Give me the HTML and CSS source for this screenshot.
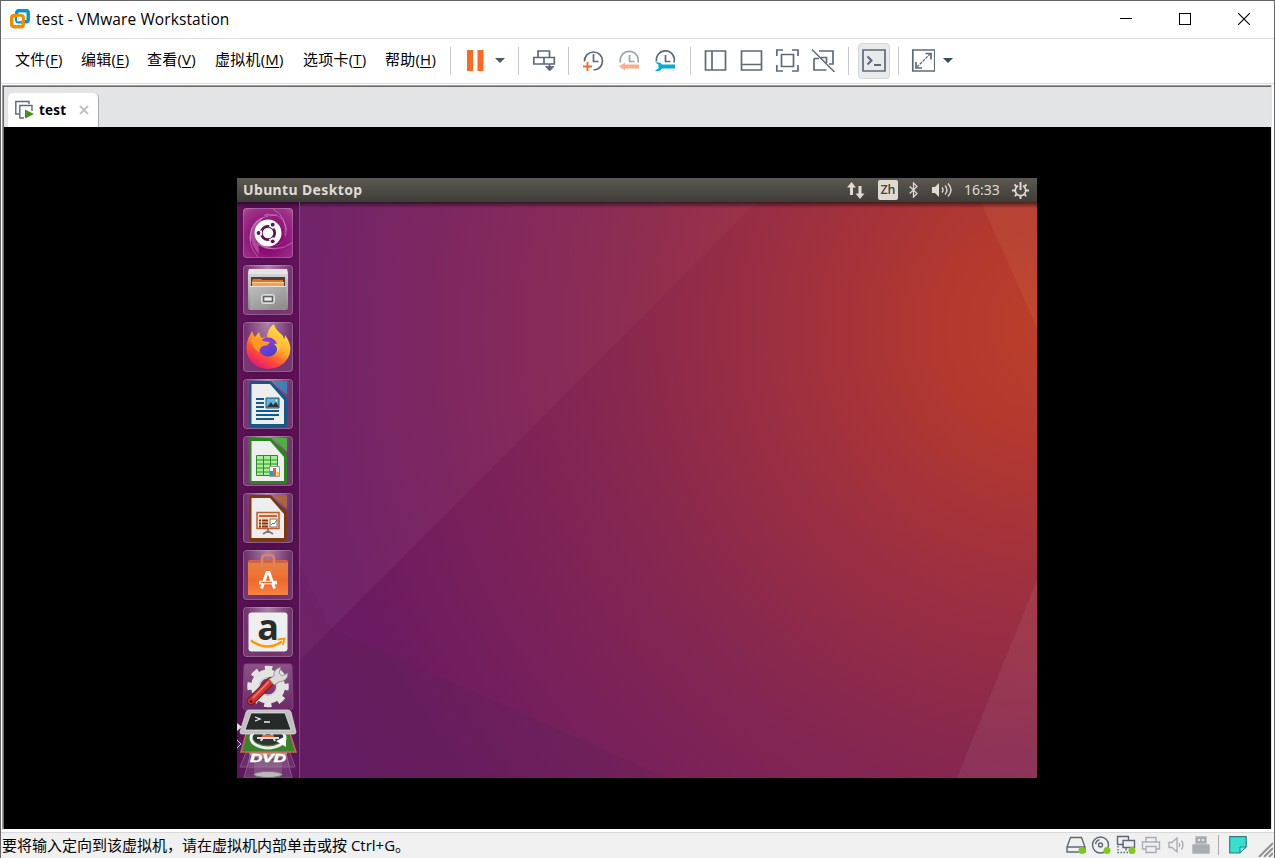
FILE: index.html
```html
<!DOCTYPE html>
<html lang="zh-CN">
<head>
<meta charset="utf-8">
<title>test - VMware Workstation</title>
<link rel="stylesheet" href="styles.css">
</head>
<body>
<div class="window">
  <header class="titlebar">
    <svg class="logo" width="22" height="22" viewBox="0 0 22 22" fill="none">
      <rect x="7.700" y="2.700" width="11.500" height="11" rx="2" stroke="#0095d3" stroke-width="3.400"/>
      <rect x="2.700" y="7.700" width="11.500" height="11" rx="2" stroke="#f38b00" stroke-width="3.400"/>
      <path d="M7.700 9V13.200H12" stroke="#0095d3" stroke-width="1.500"/>
      <path d="M8.700 9.500V12.500H12V9.500z" stroke="#fff" stroke-width="1.300"/>
    </svg>
    <span class="title">test - VMware Workstation</span>
    <div class="controls">
      <svg width="12" height="12"><path d="M0 5.500H12" stroke="#000"/></svg>
      <svg width="12" height="12"><rect x=".5" y=".5" width="11" height="11" fill="none" stroke="#000"/></svg>
      <svg width="12" height="12"><path d="M0 0L12 12M12 0L0 12" stroke="#000" stroke-width="1.100"/></svg>
    </div>
  </header>

  <nav class="menubar">
    <div class="menus">
      <span>文件(<u>F</u>)</span><span>编辑(<u>E</u>)</span><span>查看(<u>V</u>)</span><span>虚拟机(<u>M</u>)</span><span>选项卡(<u>T</u>)</span><span>帮助(<u>H</u>)</span>
    </div>
    <div class="group power">
      <svg class="ico" viewBox="0 0 24 24"><path d="M3 2h6v21H3zM13.500 2h6v21h-6z" fill="#fb6a21"/></svg>
      <svg class="caret" width="12" height="8"><path d="M1 2H11L6 7Z" fill="#485969"/></svg>
    </div>
    <div class="group send">
      <svg class="ico line" viewBox="0 0 24 24"><path d="M6 9V3h11.500v6M1.800 9.500h20.500v6.500H1.800zM12 9.500V16M17.500 16v6"/><path d="M13.500 18.500h8.500L17.700 23z" fill="#5d6b78" stroke-width=".8"/></svg>
    </div>
    <div class="group snaps">
      <svg class="ico line" viewBox="0 0 24 24"><path d="M3.500 13.500A9 9 0 1 1 12.500 22M12.500 6v7.500h5"/><path class="orange" d="M2 18.500h9M6.500 14v9"/></svg>
      <svg class="ico line" viewBox="0 0 24 24"><g opacity=".6"><path d="M3.500 14.500A9 9 0 1 1 21 14.500M12.500 7v6.500h5"/><path d="M2 18.500L8 14.500v2h14v4H8v2z" fill="#fb7a3d" stroke="none"/></g></svg>
      <svg class="ico line" viewBox="0 0 24 24"><path d="M3.500 13.500A9 9 0 1 1 21 14.500M12.500 7v6.500h5"/><path d="M2 14.500q5-1.200 7 2h13v4H9q-2 3.700-7 2l3.500-2v-4z" fill="#00aed0" stroke="none"/></svg>
    </div>
    <div class="group views">
      <svg class="ico line" viewBox="0 0 24 24"><path d="M2.500 3h20v19h-20zM9 3v19"/></svg>
      <svg class="ico line" viewBox="0 0 24 24"><path d="M2.500 3h20v19h-20zM2.500 16.500h20"/></svg>
      <svg class="ico line" viewBox="0 0 24 24"><path d="M1.800 8V2H8M17 2h6v6M23 17v6h-6M8 23H1.800v-6M6.500 6.500h12v12h-12z"/></svg>
      <svg class="ico line" viewBox="0 0 24 24"><path d="M8 3h14v13h-4M3 10.500v11.500h12.500M3 10.500h5M9.500 9.500h6V15"/><path d="M1 1.500L23.500 24" stroke-width="1.500"/></svg>
    </div>
    <div class="group console">
      <span class="pressed"><svg class="ico line" viewBox="0 0 24 24"><path d="M1 2h22v21H1z"/><path d="M5.500 8.500l4 4-4 4M12 17h7" stroke-width="2.100"/></svg></span>
    </div>
    <div class="group full">
      <svg class="ico line" viewBox="0 0 24 24"><path d="M1.800 2h22v21h-22z"/><path d="M14.500 5.500h5.500v6M5 14v6h6"/><path d="M6 19L19 6" stroke-dasharray="3 1" stroke-width="1.300"/></svg>
      <svg class="caret" width="12" height="8"><path d="M1 2H11L6 7Z" fill="#354b5e"/></svg>
    </div>
  </nav>

  <main class="frame">
    <div class="tabs">
      <div class="tab">
        <svg width="20" height="20" fill="none" stroke="#5b6b78" stroke-width="1.400"><path d="M4 14H.8V1.500H14V4"/><path d="M9 18H4.800V5.500H17V11"/><path d="M10 9.500L19 14l-9 4.500z" fill="#3d9412" stroke="none"/></svg>
        <b>test</b>
        <svg class="close" width="10" height="10"><path d="M1 1l8 8M9 1L1 9" stroke="#c2c2c2" stroke-width="1.900"/></svg>
      </div>
    </div>
    <div class="screen">
      <div class="desktop">
        <svg class="wallpaper" width="800" height="600" viewBox="0 0 800 600">
          <defs>
            <radialGradient id="wall" gradientUnits="userSpaceOnUse" cx="815" cy="150" r="860">
              <stop offset="0" stop-color="#bd3f2a"/><stop offset=".13" stop-color="#b3392f"/><stop offset=".3" stop-color="#9f303f"/>
              <stop offset=".5" stop-color="#88284e"/><stop offset=".68" stop-color="#7a2159"/><stop offset=".86" stop-color="#6c1b61"/><stop offset="1" stop-color="#681b64"/>
            </radialGradient>
            <linearGradient id="shade" x2="0" y2="1"><stop stop-color="#000" stop-opacity=".55"/><stop offset="1" stop-color="#000" stop-opacity="0"/></linearGradient>
            <linearGradient id="veil" x2="1"><stop stop-color="#9a60a0" stop-opacity=".13"/><stop offset="1" stop-color="#e07070" stop-opacity=".06"/></linearGradient>
          </defs>
          <path d="M0 0h800v600H0z" fill="url(#wall)"/>
          <path d="M62 24H520L94 451 62 385z" fill="url(#veil)"/>
          <path d="M62 385L94 451 62 484z" fill="#fff" opacity=".03"/>
          <path d="M62 484L94 451 430 600H62z" fill="#4a2850" opacity=".14"/>
          <path d="M744 24h56v126z" fill="#d67a50" opacity=".16"/>
          <path d="M800 402v198h-80z" fill="#fff" opacity=".06"/>
          <path d="M0 24h800v6H0z" fill="url(#shade)"/>
        </svg>
        <div class="panel">
          <span class="panel-title">Ubuntu Desktop</span>
          <div class="indicators">
            <svg class="net" width="18" height="17" fill="#dfdbd2"><path d="M0 5.500L4.500 0 9 5.500H6V13H3V5.500zM8.500 11.500h3V4h3v7.500h3L13 17z"/></svg>
            <span class="ime">Zh</span>
            <svg class="bt" width="9" height="16" fill="none" stroke="#dfdbd2" stroke-width="1.300"><path d="M.7 4.500L8 11.500 4.500 15V1L8 4.500.7 11.500"/></svg>
            <svg class="vol" width="20" height="16" fill="none" stroke="#dfdbd2" stroke-width="1.400"><path d="M0 5h3l4-4v14l-4-4H0z" fill="#dfdbd2" stroke="none"/><path d="M10 5.500q2 2.500 0 5M13 3.500q4 4.500 0 9M16 1.500q6 6.500 0 13"/></svg>
            <span class="clock">16:33</span>
            <svg class="gear" width="17" height="17" viewBox="0 0 17 17" fill="none" stroke="#dfdbd2"><path d="M6 3.800a5.200 5.200 0 1 0 5 0" stroke-width="1.700"/><path d="M8.500 0v8" stroke-width="2"/><path d="M2.500 2.500l2.300 2.300M14.500 2.500l-2.300 2.300M0 8.500h3M14 8.500h3M2.800 14.200l2-2M14.200 14.200l-2-2M8.500 14v3" stroke-width="1.900"/></svg>
          </div>
        </div>
        <aside class="launcher">
          <div class="tile dash"><svg width="50" height="50" viewBox="0 0 50 50">
            <path d="M7 34Q4 12 26 7 42 6 43 24 42 38 30 38 44 36 44 20 40 4 22 6M16 46Q2 32 14 15M12 33Q24 49 48 34 30 46 12 33" fill="#fff" opacity=".26"/>
            <path d="M15 49Q3 36 9 20 16 7 34 7M30 1Q45 9 42 28M49 35Q31 47 14 35" fill="none" stroke="#fff" opacity=".3"/>
            <circle cx="25" cy="25" r="13.500" fill="#fff"/><circle cx="25" cy="25" r="6.700" fill="none" stroke="#611052" stroke-width="2.700"/>
            <path d="M16 25h3M29.500 17.200l-1.500 2.600M29.500 32.800l-1.500-2.600" stroke="#fff" stroke-width="5"/><g fill="#611052"><circle cx="15.500" cy="25" r="1.900"/><circle cx="29.700" cy="16.700" r="1.900"/><circle cx="29.700" cy="33.300" r="1.900"/></g>
          </svg></div>
          <div class="tile"><svg width="50" height="50" viewBox="0 0 50 50">
            <defs><linearGradient id="steel" x2="0" y2="1"><stop stop-color="#dfdfdf"/><stop offset="1" stop-color="#858585"/></linearGradient><linearGradient id="drawer" x2=".7" y2="1"><stop stop-color="#bdbdbd"/><stop offset=".45" stop-color="#aaa"/><stop offset="1" stop-color="#8f8f8f"/></linearGradient></defs>
            <path d="M6 4h38l1 6v34l-2 1H7l-2-1V10z" fill="url(#steel)"/><path d="M6 4h38l1 5H5z" fill="#e4e4e4"/><path d="M8 12h34v10H8z" fill="#4c4038"/><path d="M10 14h8l1 1h21v7H9v-6z" fill="#e66d28"/><path d="M9 17h32v1.500H9z" fill="#ffd29c"/><path d="M9 18.500h32V22H9z" fill="#efa252"/>
            <path d="M7 21h36v24H7z" fill="url(#drawer)"/><path d="M7 21.500h36" stroke="#e4e4e4"/><rect x="18.500" y="29.500" width="13" height="9" rx="2" fill="#bcbcbc" stroke="#ddd"/><rect x="20.700" y="31.700" width="8.600" height="4.600" fill="#eee" stroke="#555" stroke-width="1.200"/>
          </svg></div>
          <div class="tile"><svg width="50" height="50" viewBox="0 0 50 50">
            <defs><linearGradient id="fox" x1=".85" x2=".25" y2="1"><stop stop-color="#fff15a"/><stop offset=".45" stop-color="#ffae25"/><stop offset=".72" stop-color="#ff4c35"/><stop offset="1" stop-color="#e3127e"/></linearGradient><linearGradient id="globe" x2=".5" y2="1"><stop stop-color="#a13be5"/><stop offset="1" stop-color="#4b43c8"/></linearGradient></defs>
            <path d="M31 2q1 5 6 9 3 2 4 6 1-1 1-4 9 12 3 23-7 11-20 11Q9 46 4 32 2 21 7 13l2-4q1 4 3 6l4-5 2 6q4-1 6 0 0-9 7-14z" fill="url(#fox)"/>
            <circle cx="25" cy="25" r="9.700" fill="url(#globe)"/><path d="M8 17q9-2 12 2l7 1q-2 4-7 4-5 3-3 6-7-1-9-13z" fill="#ff9a1d"/><path d="M23 15q9-1 12 7-3-1-4 0 5 4 2 9 9-8 2-16-5-3-12 0z" fill="#ffc238"/>
          </svg></div>
          <div class="tile"><svg width="50" height="50" viewBox="0 0 50 50">
            <path d="M8 2h20l16 17v27q0 2-2 2H8q-2 0-2-2V4q0-2 2-2z" fill="#135a8b"/><path d="M30 2h14v14z" fill="#3089bd" opacity=".85"/><path d="M8.500 5H27l14 16v24H8.500z" fill="#eee"/>
            <path d="M13 20h8M13 24h8M13 28h8M13 32h23M13 36h23M13 40h18" stroke="#0d5b91" stroke-width="1.800"/><path d="M23 19h13v10H23z" fill="#63b2e3" stroke="#155782"/><path d="M24 28l4-5 2 3 3-3 3 5z" fill="#333"/><circle cx="33.500" cy="21.500" r="1" fill="#ff3"/>
          </svg></div>
          <div class="tile"><svg width="50" height="50" viewBox="0 0 50 50">
            <path d="M8 2h20l16 17v27q0 2-2 2H8q-2 0-2-2V4q0-2 2-2z" fill="#26881b"/><path d="M30 2h14v14z" fill="#49b83b" opacity=".9"/><path d="M8.500 5H27l14 16v24H8.500z" fill="#eee"/>
            <path d="M13.500 19.500h21v20h-21z" fill="#a9ed99" stroke="#279021"/><path d="M13 24h22M13 28h22M13 32h22M13 36h22M20.500 19v21M27.500 19v21" stroke="#279021"/><path d="M26.500 30.500h10v10h-10z" fill="#fff" stroke="#999"/><path d="M27 35h3v5h-3z" fill="#2996d2"/><path d="M30 32h3v8h-3z" fill="#ef6027"/><path d="M33.500 36h2.500v4h-2.500z" fill="#f8c434"/>
          </svg></div>
          <div class="tile"><svg width="50" height="50" viewBox="0 0 50 50">
            <path d="M8 2h20l16 17v27q0 2-2 2H8q-2 0-2-2V4q0-2 2-2z" fill="#7c390f"/><path d="M30 2h14v14z" fill="#b36a35" opacity=".85"/><path d="M8.500 5H27l14 16v24H8.500z" fill="#eee"/>
            <path d="M14 19.500h22v16H14z" fill="#fde0c8" stroke="#c15c30" stroke-width="1.500"/><path d="M16 23h18" stroke="#cb632e" stroke-width="2"/><path d="M16 27.500h9M16 30.500h9M16 33.500h9" stroke="#803511" stroke-width="2" stroke-dasharray="2 1 6"/><path d="M27 26h7v8h-7z" fill="#fff" stroke="#777"/><path d="M28 32l2-2 1 1 3-4" stroke="#289b36" fill="none"/><path d="M25 36v2l-5 3M25 38l5 3" stroke="#777" stroke-width="1.700" fill="none"/>
          </svg></div>
          <div class="tile"><svg width="50" height="50" viewBox="0 0 50 50">
            <defs><linearGradient id="bag" x2="0" y2="1"><stop stop-color="#e48647"/><stop offset=".6" stop-color="#f06b2a"/><stop offset="1" stop-color="#f68244"/></linearGradient></defs>
            <path d="M6 10h38l1 3v32H5V13z" fill="url(#bag)"/><path d="M6 10h38v3H6z" fill="#cf6345"/><path d="M19 17v-8q0-4 4-4h4q4 0 4 4v8" fill="none" stroke="#e38062" stroke-width="2.300"/>
            <path d="M18.500 38.500l5.500-16h2l5.500 16" fill="none" stroke="#fff" stroke-width="3"/><path d="M16 32.500h18" stroke="#fff" stroke-width="3.500"/><path d="M18 32.500h11" stroke="#ee6a2a" stroke-width="1.300"/>
          </svg></div>
          <div class="tile"><svg width="50" height="50" viewBox="0 0 50 50"><rect x="5.500" y="5.500" width="39" height="39" rx="3" fill="#eee"/><text class="amazon" x="25" y="33" text-anchor="middle">a</text><path d="M8 33.500q16 11.500 31 1" stroke="#ff9800" stroke-width="2.400" fill="none"/><path d="M34.500 32.500l7-1-1.500 6.500" stroke="#ff9800" stroke-width="1.800" fill="none"/></svg></div>
          <svg class="folded" width="62" height="116" viewBox="0 0 62 116">
            <defs><linearGradient id="tool" x2="0" y2="1"><stop stop-color="#fff" stop-opacity=".28"/><stop offset="1" stop-color="#fff" stop-opacity=".09"/></linearGradient></defs>
            <path d="M9 1h44q2 0 2 3l1 39q0 4-3 4H9q-3 0-3-4L7 4q0-3 2-3z" fill="url(#tool)" stroke="#85457b"/>
            <circle cx="31" cy="23.500" r="18.500" fill="none" stroke="#e4e4e3" stroke-width="4.500" stroke-dasharray="7.500 7.030" stroke-dashoffset="3.750"/><circle cx="31" cy="23.500" r="12.500" fill="none" stroke="#e4e4e3" stroke-width="9"/><circle cx="31" cy="23.500" r="9" fill="none" stroke="#c6c6c6"/>
            <path d="M14 38L34 18" stroke="#771513" stroke-width="8.500" stroke-linecap="round"/><path d="M14 38L34 18" stroke="#d43430" stroke-width="6.500" stroke-linecap="round"/><path d="M16 35L32 18.500" stroke="#f08178" stroke-width="1.500"/><path d="M32 16l5-3q-1-7 7-9l-2 6 3 3 6-3q0 8-9 9l-5 3z" fill="#dadad8" stroke="#858585" stroke-width=".8"/>
            <circle cx="14" cy="38.500" r="1.500" fill="#611"/>
            <path d="M7 115L15 86h33l7 29z" fill="#fff" fill-opacity=".13" stroke="#8a5586"/><path d="M3 104l7-17h42l6 17z" fill="#fff" fill-opacity=".1" stroke="#8a5586"/>
            <ellipse cx="31" cy="90" rx="19" ry="6" fill="#c88d91"/><ellipse cx="31" cy="97" rx="17" ry="5" fill="#555" opacity=".4"/><path d="M17 97h28v15H17z" fill="#fff" opacity=".13"/><ellipse cx="31" cy="111.500" rx="14" ry="3" fill="#bcb8bc" stroke="#777"/>
            <path d="M4 89L11 64h40l8 25z" fill="#3d802e" stroke="#c76a50" stroke-width="1.500"/><ellipse cx="31" cy="75" rx="17" ry="10" fill="none" stroke="#eee" stroke-width="3"/><ellipse cx="31" cy="74" rx="15" ry="8" fill="#303332"/><path d="M24 78l5-10h4l5 10M20 75h22" fill="none" stroke="#ddd" stroke-width="2"/><path d="M25 73h12" stroke="#e8682e" stroke-width="2"/><path d="M39 78l10-5v11z" fill="#fff"/>
            <text class="dvd" x="31" y="98.500" text-anchor="middle" textLength="36" lengthAdjust="spacingAndGlyphs">DVD</text>
            <path d="M12 47h39q2 0 3 2l5 20q0 2-2 2H5q-2 0-2-2l6-20q1-2 3-2z" fill="#bfc0bf" stroke="#e3e3e3" stroke-width=".7"/><path d="M14 50h34l6 17H8z" fill="#252b29" stroke="#eee" stroke-width=".7"/><path d="M18 54l5 2-5 2M27 59h6" fill="none" stroke="#eee" stroke-width="1.300"/>
            <path d="M0 60l5 4-5 4z" fill="#ddd"/><path d="M0 77l4 4-4 4" fill="none" stroke="#9cd4ff"/>
          </svg>
        </aside>
      </div>
    </div>
  </main>

  <footer class="status">
    <span class="message">要将输入定向到该虚拟机，请在虚拟机内部单击或按 Ctrl+G。</span>
    <div class="devices">
      <svg class="dev" viewBox="0 0 20 20"><path d="M4.500 2.500h11L19 12v5H1v-5zM1 12h18"/><circle class="on" cx="16" cy="15.500" r="3.500"/></svg>
      <svg class="dev" viewBox="0 0 20 20"><circle cx="9.500" cy="10" r="8"/><circle cx="9.500" cy="10" r="2"/><path d="M4.500 9q1-4 4-4"/><circle class="on" cx="16" cy="15.500" r="3.500"/></svg>
      <svg class="dev" viewBox="0 0 20 20"><path d="M8 9.500H1.500v-8h11V5M7 5.500h11.500v7H7zM10 12.500v3"/><path d="M2 11v6.500h11" stroke-dasharray="1.500 1.500"/><circle class="on" cx="16" cy="15.500" r="3.500"/></svg>
      <svg class="dev dim" viewBox="0 0 20 20"><path d="M5 7V2.500h10V7M5 14H1.500V7h17v7H15M5 11.500h10v6H5z"/></svg>
      <svg class="dev dim" viewBox="0 0 20 20"><path d="M3 7.500h3l5-4.500v14l-5-4.500H3zM13 8q1.500 2 0 4M15.500 5.500q3 4.500 0 9"/></svg>
      <svg class="dev dim" viewBox="0 0 20 20"><path d="M5 2h10v6H5zM2 10h16v8H2z" fill="#a9adb3"/><path d="M8 4v2M12 4v2" stroke="#fff"/></svg>
      <i class="divider"></i>
      <svg class="note" width="18" height="18"><path d="M.7.700h16.500v10L10.500 17H.7z" fill="#37dfcd" stroke="#317c80" stroke-width="1.200"/><path d="M17 11h-6v6z" fill="#79f0e5" stroke="#317c80"/></svg>
      <svg class="grip" width="15" height="15"><path d="M1 15L15 1M6 15l9-9M11 15l4-4" stroke="#929292" stroke-width="2"/></svg>
    </div>
  </footer>
</div>
</body>
</html>
```
FILE: styles.css
```css
* { box-sizing: border-box; }
body { margin: 0; font-family: "Open Sans", "Noto Sans CJK SC", sans-serif; font-size: 15px; color: #000; overflow: hidden; }
svg { display: block; flex: none; }
.window { width: 1275px; height: 858px; display: flex; flex-direction: column; background: #fff; border: 1px solid #666; border-bottom-width: 0; }
.titlebar { height: 38px; flex: none; display: flex; align-items: center; padding: 0 24px 2px 8px; border-bottom: 1px solid #dedede; }
.logo { margin-right: 5px; }
.title { font-size: 15.500px; letter-spacing: .1px; white-space: nowrap; }
.controls { margin-left: auto; display: flex; gap: 47px; }
.menubar { height: 45px; flex: none; display: flex; align-items: center; border-bottom: 1px solid #dedede; }
.menus { width: 449px; padding: 0 0 5px 14px; display: grid; grid-template-columns: 66px 66px 68px 88px 82px auto; line-height: 24px; letter-spacing: .22px; white-space: nowrap; }
.menus u { text-underline-offset: 2px; }
.group { display: flex; align-items: center; flex: none; }
.group::before { content: ""; width: 1px; height: 28px; background: #c9c9c9; }
.power { width: 68px; }
.power::before, .send::before { margin-right: 13px; }
.power .caret { margin-left: 6px; }
.send { width: 50px; }
.snaps { width: 122px; gap: 12px; }
.views { width: 158px; gap: 12px; }
.console { width: 50px; gap: 9px; }
.full::before { margin-right: 12px; }
.full .caret { margin-left: 7px; }
.ico { width: 24px; height: 24px; margin-bottom: 2px; }
.caret { margin-bottom: 2px; }
.line { fill: none; stroke: #5d6b78; stroke-width: 1.700; }
.line .orange { stroke: #f36b2c; stroke-width: 1.900; }
.pressed { width: 32px; height: 36px; padding: 4px 3px; background: #e9eaec; border: 1px solid #d7d7d7; border-radius: 4px; }
.frame { height: 745px; flex: none; margin: 1px 2px 0 1px; border: 1px solid #a0a0a0; border-right-color: #e3e3e3; border-bottom: 1px solid #fff; display: flex; flex-direction: column; }
.tabs { height: 41px; flex: none; display: flex; align-items: flex-end; border: 1px solid #696969; border-width: 1px 0 0 1px; background: #e3e4e6; padding-left: 4px; }
.tab { width: 91px; height: 34px; display: flex; align-items: center; padding-left: 7px; background: #fff; border-right: 1px solid #aaa; border-radius: 5px 5px 0 0; font-size: 13.500px; letter-spacing: .2px; }
.tab b { width: 40px; margin-left: 4px; }
.screen { flex: 1; background: #000; padding: 51px 0 0 232px; border-left: 1px solid #696969; }
.desktop { width: 800px; height: 600px; margin-left: 1px; display: grid; grid-template-rows: 24px 576px; overflow: hidden; position: relative; }
.wallpaper { position: absolute; inset: 0; }
.panel { position: relative; display: flex; align-items: center; justify-content: space-between; padding: 0 8px 0 6px; background: linear-gradient(#5b5950, #3e3d38); color: #dfdbd2; }
.panel-title { font: 700 14px/20px "Noto Sans", sans-serif; letter-spacing: .36px; padding-bottom: 1px; }
.indicators { display: flex; align-items: center; }
.ime { width: 20px; height: 20px; margin: 0 11px 0 13px; border-radius: 2px; background: #dfdbd2; color: #45433e; font: 600 12.500px/20px "Open Sans", sans-serif; text-align: center; }
.bt { margin-right: 14px; }
.clock { width: 37px; margin: 0 11px 0 12px; font: 14px/22px "Noto Sans", sans-serif; }
.launcher { position: relative; width: 63px; height: 576px; padding: 6px 0 0 6px; background: linear-gradient(#66145f, #591154 60%, #5e165c); border-right: 1px solid #834783; display: flex; flex-direction: column; gap: 7px; box-shadow: inset 0 5px 5px -3px #200520; }
.tile { width: 50px; height: 50px; flex: none; border-radius: 4px; border: 1px solid rgba(255,255,255,.2); background: radial-gradient(ellipse at 50% 0, rgba(255,255,255,.48), rgba(255,255,255,.14) 65%, rgba(255,255,255,.17)) border-box; box-shadow: 0 0 4px rgba(30,0,30,.5); }
.tile svg { margin: -1px; }
.dash { background: radial-gradient(circle at 50% 60%, #8b0874 30%, #9d3288 80%, #ad5796) border-box; }
.amazon { font: 700 36px/36px "Open Sans", sans-serif; fill: #2b2b2b; }
.folded { margin: -1px 0 0 -6px; }
.dvd { font: italic 900 11px "Liberation Sans", sans-serif; fill: #fff; stroke: #fff; stroke-width: .5px; }
.status { flex: 1; display: flex; align-items: center; justify-content: space-between; margin-top: 2px; background: #f0f0f0; border-top: 1px solid #d8d8d8; padding: 0 1px 1px 0; white-space: nowrap; }
.message { padding: 0 0 1px 1px; }
.devices { display: flex; align-items: center; gap: 5px; }
.dev { width: 20px; height: 20px; fill: none; stroke: #5c6975; stroke-width: 1.400; }
.dim { stroke: #a9adb3; }
.on { fill: #82c91e; stroke: none; }
.divider { width: 1px; height: 20px; background: #aaa; margin: 0 5px 0 2px; }
.grip { margin: 8px 0 0 6px; }
```
